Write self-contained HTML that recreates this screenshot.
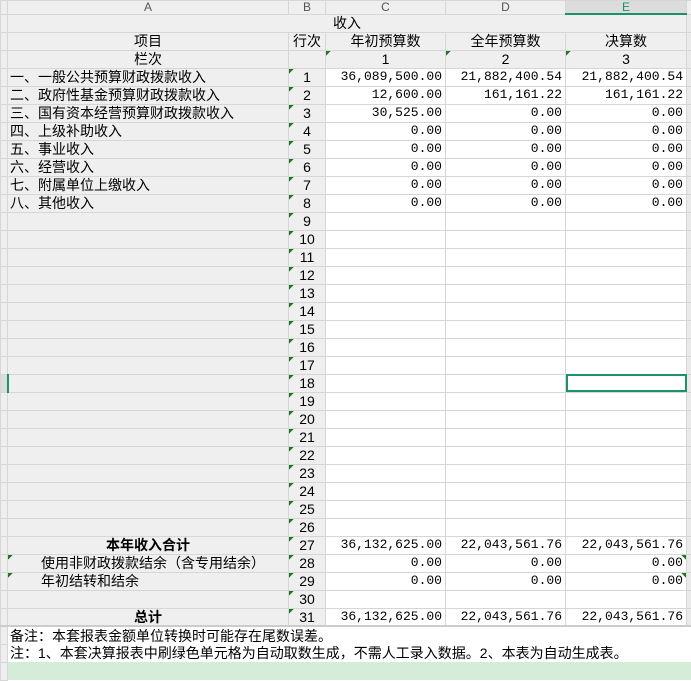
<!DOCTYPE html>
<html><head><meta charset="utf-8"><style>
*{margin:0;padding:0;box-sizing:border-box}
body{width:691px;height:667px;overflow:hidden;background:#fff;font-family:"Liberation Sans","Noto Sans CJK SC",sans-serif;position:relative}
table{position:absolute;left:0;top:0;border-collapse:collapse;table-layout:fixed;width:700px}
td{height:18px;border:1px solid #d6d6d6;font-size:14px;line-height:16px;white-space:nowrap;overflow:hidden;padding:0 2px;color:#000}
tr.h td{height:13px;font-size:12px;line-height:12px;text-align:center;color:#555;background:#efefef;border-color:#d6d6d6}
.g{background-color:#efefef}
.c{text-align:center}
.n{text-align:right;font-family:"Liberation Mono",monospace;font-size:13px;padding-right:3px}
.gt{background-image:linear-gradient(135deg,#1e7a1e 3.5px,transparent 3.5px);background-repeat:no-repeat;background-size:6px 6px;background-position:0 0}
.rt{background-image:linear-gradient(225deg,#1e7a1e 3.5px,transparent 3.5px);background-repeat:no-repeat;background-size:6px 6px;background-position:100% 0}
.b{font-weight:bold;text-align:center}
.gut{background:#efefef;padding:0}
.F{background:#eaeaea}
</style></head><body>
<table>
<colgroup><col style="width:7px"><col style="width:281px"><col style="width:37px"><col style="width:120px"><col style="width:120px"><col style="width:121px"><col style="width:14px"></colgroup>
<tr class="h"><td class="gut"></td><td>A</td><td>B</td><td>C</td><td>D</td><td style="background:#dcdcdc;border-bottom:2px solid #1a9369;color:#1a9369">E</td><td></td></tr>
<tr><td class="gut"></td><td class="g c" colspan="5">收入</td><td class="F"></td></tr>
<tr><td class="gut"></td><td class="g c">项目</td><td class="g c">行次</td><td class="g c">年初预算数</td><td class="g c">全年预算数</td><td class="g c">决算数</td><td class="F"></td></tr>
<tr><td class="gut"></td><td class="g c">栏次</td><td class="g"></td><td class="g c gt">1</td><td class="g c gt">2</td><td class="g c gt">3</td><td class="F"></td></tr>
<tr><td class="gut"></td><td class="g">一、一般公共预算财政拨款收入</td><td class="g c gt">1</td><td class="n">36,089,500.00</td><td class="n">21,882,400.54</td><td class="n">21,882,400.54</td><td class="F"></td></tr>
<tr><td class="gut"></td><td class="g">二、政府性基金预算财政拨款收入</td><td class="g c gt">2</td><td class="n">12,600.00</td><td class="n">161,161.22</td><td class="n">161,161.22</td><td class="F"></td></tr>
<tr><td class="gut"></td><td class="g">三、国有资本经营预算财政拨款收入</td><td class="g c gt">3</td><td class="n">30,525.00</td><td class="n">0.00</td><td class="n">0.00</td><td class="F"></td></tr>
<tr><td class="gut"></td><td class="g">四、上级补助收入</td><td class="g c gt">4</td><td class="n">0.00</td><td class="n">0.00</td><td class="n">0.00</td><td class="F"></td></tr>
<tr><td class="gut"></td><td class="g">五、事业收入</td><td class="g c gt">5</td><td class="n">0.00</td><td class="n">0.00</td><td class="n">0.00</td><td class="F"></td></tr>
<tr><td class="gut"></td><td class="g">六、经营收入</td><td class="g c gt">6</td><td class="n">0.00</td><td class="n">0.00</td><td class="n">0.00</td><td class="F"></td></tr>
<tr><td class="gut"></td><td class="g">七、附属单位上缴收入</td><td class="g c gt">7</td><td class="n">0.00</td><td class="n">0.00</td><td class="n">0.00</td><td class="F"></td></tr>
<tr><td class="gut"></td><td class="g">八、其他收入</td><td class="g c gt">8</td><td class="n">0.00</td><td class="n">0.00</td><td class="n">0.00</td><td class="F"></td></tr>
<tr><td class="gut"></td><td class="g"></td><td class="g c gt">9</td><td></td><td></td><td></td><td class="F"></td></tr>
<tr><td class="gut"></td><td class="g"></td><td class="g c gt">10</td><td></td><td></td><td></td><td class="F"></td></tr>
<tr><td class="gut"></td><td class="g"></td><td class="g c gt">11</td><td></td><td></td><td></td><td class="F"></td></tr>
<tr><td class="gut"></td><td class="g"></td><td class="g c gt">12</td><td></td><td></td><td></td><td class="F"></td></tr>
<tr><td class="gut"></td><td class="g"></td><td class="g c gt">13</td><td></td><td></td><td></td><td class="F"></td></tr>
<tr><td class="gut"></td><td class="g"></td><td class="g c gt">14</td><td></td><td></td><td></td><td class="F"></td></tr>
<tr><td class="gut"></td><td class="g"></td><td class="g c gt">15</td><td></td><td></td><td></td><td class="F"></td></tr>
<tr><td class="gut"></td><td class="g"></td><td class="g c gt">16</td><td></td><td></td><td></td><td class="F"></td></tr>
<tr><td class="gut"></td><td class="g"></td><td class="g c gt">17</td><td></td><td></td><td></td><td class="F"></td></tr>
<tr><td class="gut" style="background:#dcdcdc;border-right:2px solid #1a9369"></td><td class="g"></td><td class="g c gt">18</td><td></td><td></td><td style="outline:2px solid #1a9369;outline-offset:-2px"></td><td class="F"></td></tr>
<tr><td class="gut"></td><td class="g"></td><td class="g c gt">19</td><td></td><td></td><td></td><td class="F"></td></tr>
<tr><td class="gut"></td><td class="g"></td><td class="g c gt">20</td><td></td><td></td><td></td><td class="F"></td></tr>
<tr><td class="gut"></td><td class="g"></td><td class="g c gt">21</td><td></td><td></td><td></td><td class="F"></td></tr>
<tr><td class="gut"></td><td class="g"></td><td class="g c gt">22</td><td></td><td></td><td></td><td class="F"></td></tr>
<tr><td class="gut"></td><td class="g"></td><td class="g c gt">23</td><td></td><td></td><td></td><td class="F"></td></tr>
<tr><td class="gut"></td><td class="g"></td><td class="g c gt">24</td><td></td><td></td><td></td><td class="F"></td></tr>
<tr><td class="gut"></td><td class="g"></td><td class="g c gt">25</td><td></td><td></td><td></td><td class="F"></td></tr>
<tr><td class="gut"></td><td class="g"></td><td class="g c gt">26</td><td></td><td></td><td></td><td class="F"></td></tr>
<tr><td class="gut"></td><td class="g b">本年收入合计</td><td class="g c gt">27</td><td class="n">36,132,625.00</td><td class="n">22,043,561.76</td><td class="n">22,043,561.76</td><td class="F"></td></tr>
<tr><td class="gut"></td><td class="g gt" style="padding-left:33px">使用非财政拨款结余（含专用结余）</td><td class="g c gt">28</td><td class="n">0.00</td><td class="n">0.00</td><td class="n rt">0.00</td><td class="F"></td></tr>
<tr><td class="gut"></td><td class="g gt" style="padding-left:33px">年初结转和结余</td><td class="g c gt">29</td><td class="n">0.00</td><td class="n">0.00</td><td class="n rt">0.00</td><td class="F"></td></tr>
<tr><td class="gut"></td><td class="g"></td><td class="g c gt">30</td><td></td><td></td><td></td><td class="F"></td></tr>
<tr><td class="gut"></td><td class="g b">总计</td><td class="g c gt">31</td><td class="n">36,132,625.00</td><td class="n">22,043,561.76</td><td class="n">22,043,561.76</td><td class="F"></td></tr>
<tr><td class="gut" style="border-top:2px solid #ccc"></td><td colspan="6" style="border:none;border-top:2px solid #ccc;padding-left:2px">备注：本套报表金额单位转换时可能存在尾数误差。</td></tr>
<tr><td class="gut"></td><td colspan="6" style="border:none;padding-left:2px">注：1、本套决算报表中刷绿色单元格为自动取数生成，不需人工录入数据。2、本表为自动生成表。</td></tr>
<tr><td class="gut"></td><td colspan="6" style="border:none;background:#d5ecd9"></td></tr>
</table>
</body></html>
